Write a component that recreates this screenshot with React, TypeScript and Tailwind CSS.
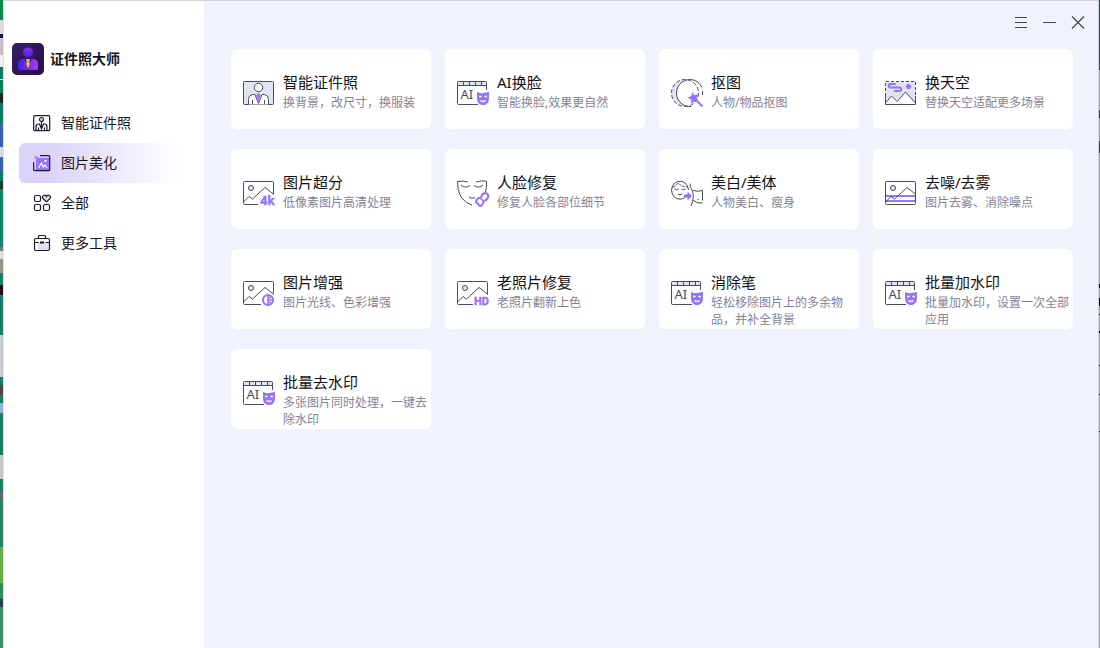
import { useState } from "react";
import type { ReactNode } from "react";

type IconName =
  | "portrait"
  | "ai"
  | "cutout"
  | "sky"
  | "upscale"
  | "face"
  | "beauty"
  | "denoise"
  | "enhance"
  | "hd";

interface Tool {
  title: string;
  desc: string;
  icon: IconName;
}

const tools: Tool[] = [
  { title: "智能证件照", desc: "换背景，改尺寸，换服装", icon: "portrait" },
  { title: "AI换脸", desc: "智能换脸,效果更自然", icon: "ai" },
  { title: "抠图", desc: "人物/物品抠图", icon: "cutout" },
  { title: "换天空", desc: "替换天空适配更多场景", icon: "sky" },
  { title: "图片超分", desc: "低像素图片高清处理", icon: "upscale" },
  { title: "人脸修复", desc: "修复人脸各部位细节", icon: "face" },
  { title: "美白/美体", desc: "人物美白、瘦身", icon: "beauty" },
  { title: "去噪/去雾", desc: "图片去雾、消除噪点", icon: "denoise" },
  { title: "图片增强", desc: "图片光线、色彩增强", icon: "enhance" },
  { title: "老照片修复", desc: "老照片翻新上色", icon: "hd" },
  { title: "消除笔", desc: "轻松移除图片上的多余物品，并补全背景", icon: "ai" },
  { title: "批量加水印", desc: "批量加水印，设置一次全部应用", icon: "ai" },
  { title: "批量去水印", desc: "多张图片同时处理，一键去除水印", icon: "ai" },
];

const ink = "#4a4a5c";
const violet = "#9373ff";
const pale = "#dfe4f0";

// sun and mountains, shared by the photo style icons
const Scenery = () => (
  <>
    <circle cx="8" cy="9" r="2.5" fill={pale} />
    <path d="M.5 23 6 17.5l3.5 2.5L22 8.5l9 7" />
  </>
);

const drawings: Record<IconName, ReactNode> = {
  portrait: (
    <>
      <rect x=".5" y="2.5" width="30" height="23" rx="1" fill={pale} />
      <path
        d="M5.5 25.5v-6q0-4 4-4l3-.5h6l3 .5q4 0 4 4v6z"
        fill="#fff"
        stroke="none"
      />
      <circle cx="15.5" cy="8.5" r="4.2" fill="#fff" />
      <path d="M5.5 25.5v-5q0-4.5 4-5h2.5l3.5 9 3.5-9h2.5q4 .5 4 5v5M9.5 25v-4M21.5 25v-4" />
      <path
        d="m15.5 14 2.5 2.5-1.5 2.5.5 2-1.5 3-1.5-3 .5-2-1.5-2.5z"
        fill={violet}
        stroke="none"
      />
    </>
  ),
  ai: (
    <>
      <rect x=".5" y="2.5" width="29" height="4" fill={pale} stroke="none" />
      <path d="M29.5 11V3.5q0-1-1-1h-27q-1 0-1 1v21q0 1 1 1H21M.5 6.5h29M6.5 3v3.500M12.5 3v3.500M18.5 3v3.500M24.5 3v3.500" />
      <text
        x="3.5"
        y="20"
        fill={ink}
        stroke="none"
        className="font-['Noto_Sans'] text-[13px]"
      >
        AI
      </text>
      <path
        d="M20 13q3 1.500 6 1t6-1v6q0 5-3.500 6.500-2.500 1-5 0Q20 24 20 19z"
        fill={violet}
        stroke="none"
      />
      <path d="M22 17.500h2.500M27.500 17.500H30M23.500 21.500q2.500 2 5 0" stroke="#fff" strokeWidth="1.5" />
    </>
  ),
  cutout: (
    <>
      <path d="M14 .5a13.500 13.500 0 0 0 0 27h5A13.500 13.500 0 0 1 19 .5z" fill={pale} stroke="none" />
      <circle cx="14" cy="14" r="13.5" strokeDasharray="4 2" />
      <path d="M26 2.500A13.500 13.500 0 1 0 20 27.500" />
      <path d="M26 2.500q3 2 5 6M31.500 12v4" />
      <path
        d="m21 12.500 2 3.500 4.500-.5-2 3.500 2 3.500-4-.5-3 3-.5-4.500-3.500-2 4-1.500z"
        fill={violet}
        stroke="none"
      />
      <path d="m25 21 6.500 6.500" stroke={violet} strokeWidth="2" />
    </>
  ),
  sky: (
    <>
      <path d="M.5 2.500h30v21.500L20.500 13 12 22l-5.500-5-6 7z" fill={pale} stroke="none" />
      <path d="M.5 17V2.500h30V17" strokeDasharray="3 2" />
      <path d="M.5 17v8.500h30V17M.5 24l6-7 5.500 5.500L20.500 13l10 11" />
      <path
        d="M10 5H5.500a1.700 1.700 0 0 0 0 3.500h9a1.700 1.700 0 0 1 0 3.500H10"
        stroke={violet}
        strokeWidth="2"
        strokeLinecap="round"
      />
      <circle cx="23.500" cy="7.500" r="2.5" fill={violet} stroke="none" />
    </>
  ),
  upscale: (
    <>
      <path d="M30.500 15V3.500q0-1-1-1h-28q-1 0-1 1v21q0 1 1 1H15" />
      <Scenery />
      <text
        x="17"
        y="26"
        fill={violet}
        stroke={violet}
        strokeWidth=".4"
        className="font-['Roboto'] text-[13px] font-bold"
      >
        4k
      </text>
    </>
  ),
  face: (
    <>
      <path d="M.5 2Q0 11 4 18q5 7 11 8M29.500 2q.5 6-1 11M1 2.500q5-1 10 .5M19 3q5-1.500 10-1M4 6q4 4 9 .5M17 6.500q5 3.500 9-.5M12 18q3 2.500 6 .5" />
      <path
        d="M24 18.500q1-4 4-4.500 4 .5 3 4.500-1.500 3-4.500 3.500-.5 4-3 5-2-.5-2.500-2.500-2-.5-2-2.500 1.500-3.500 5-3.500z"
        fill="#fff"
        stroke={violet}
        strokeWidth="2"
      />
      <path d="m23.500 19.500 3 2.500" stroke={violet} strokeWidth="1.5" />
    </>
  ),
  beauty: (
    <>
      <path d="M14 18.500A8.500 9 0 1 1 17.500 11" />
      <path d="M1 8q3 0 6-4 4 4 10 4" strokeDasharray="3 1" />
      <path d="M3.500 10q2 1.500 4 0M10.500 10q2 1.500 4 0M7 15q2 1.500 4 0M19 4.500q0 3 2 6.500 3 7-1 16M22 11.500q5 1.500 9.500 0v10M22 21q4 4 9.500 3" />
      <circle cx="27" cy="20.500" r=".7" fill={ink} stroke="none" />
      <path
        d="M13 15.500h3.500v-3l4.500 4.500-4.500 4.500v-3H13z"
        fill={violet}
        stroke="none"
      />
    </>
  ),
  denoise: (
    <>
      <path d="M1 17h30M1 22h30" stroke={violet} strokeWidth="2" />
      <rect x=".5" y="2.5" width="30" height="23" rx="1" />
      <Scenery />
    </>
  ),
  enhance: (
    <>
      <path d="M30.500 14V3.500q0-1-1-1h-28q-1 0-1 1v21q0 1 1 1H18" />
      <Scenery />
      <circle cx="25" cy="21" r="5" fill="#fff" stroke={violet} strokeWidth="2" />
      <path d="M25 16v10M25 18.500h3M25 21h4M25 23.500h3" stroke={violet} strokeWidth="1.5" />
    </>
  ),
  hd: (
    <>
      <path d="M30.500 15V3.500q0-1-1-1h-28q-1 0-1 1v21q0 1 1 1H16" />
      <Scenery />
      <text
        x="17"
        y="26"
        fill={violet}
        stroke={violet}
        strokeWidth=".4"
        className="font-['Roboto'] text-[11px] font-bold"
      >
        HD
      </text>
    </>
  ),
};

function ToolIcon({ name }: { name: IconName }) {
  return (
    <svg
      className="mt-[30px] h-7 w-[34px] shrink-0"
      viewBox="0 0 34 28"
      fill="none"
      stroke={ink}
      aria-hidden="true"
    >
      {drawings[name]}
    </svg>
  );
}

function ToolCard({ tool }: { tool: Tool }) {
  return (
    <button className="flex h-20 cursor-pointer items-start gap-1.5 rounded-md bg-white pl-3 text-left">
      <ToolIcon name={tool.icon} />
      <span className="flex flex-col gap-px pt-[22px]">
        <span className="text-[15px] leading-[22px] text-[#111118]">{tool.title}</span>
        <span className="text-xs leading-[17px] text-[#858394]">{tool.desc}</span>
      </span>
    </button>
  );
}

const navItems: { label: string; icon: ReactNode }[] = [
  {
    label: "智能证件照",
    icon: (
      <>
        <rect x=".7" y="1.7" width="16" height="15" rx="1" />
        <circle cx="8.5" cy="5.5" r="2" fill={pale} />
        <path d="M3 16.500v-4q0-2.500 2.500-2.500h1l2 5 2-5h1q2.500 0 2.500 2.500v4M5.500 16v-2.500M11.500 16v-2.500M8.500 8v6" />
      </>
    ),
  },
  {
    label: "图片美化",
    icon: (
      <>
        <rect x="3" y="4" width="13" height="12" fill={violet} stroke="none" />
        <path d="M7 1.700h8.700q1 0 1 1v13q0 1-1 1h-14q-1 0-1-1V8" />
        <path d="m5.500 14 3-5 2 4 1.500-2 2 3" stroke="#fff" />
        <circle cx="12.500" cy="7" r="1.200" fill="#fff" stroke="none" />
        <path d="m2.500 1 1 1.500L5.500 3 4 4.500l-.5 2-1-2L.5 4l1.500-1.500z" fill="#a88cff" stroke="none" />
      </>
    ),
  },
  {
    label: "全部",
    icon: (
      <>
        <rect x="1.5" y="1.5" width="6" height="6" rx="1.5" />
        <rect x="1.5" y="10.5" width="6" height="6" rx="1.5" />
        <rect x="10.5" y="10.5" width="6" height="6" rx="1.5" />
        <path
          d="m13.500 8-3.800-3.800a2 2 0 0 1 3.800-1.700 2 2 0 0 1 3.800 1.700z"
          fill={pale}
        />
      </>
    ),
  },
  {
    label: "更多工具",
    icon: (
      <>
        <rect x="5" y="8" width="11" height="8" fill={pale} stroke="none" />
        <rect x="1.5" y="4.5" width="15" height="12" rx="1.5" />
        <path d="M5.500 4.500V2.500q0-1 1-1h5q1 0 1 1v2M1.500 8.500h4M12.500 8.500h4" />
        <path d="M7 8.500h4" strokeWidth="2" />
      </>
    ),
  },
];

function Logo() {
  return (
    <svg className="size-8" viewBox="0 0 32 32" aria-hidden="true">
      <defs>
        <linearGradient id="tile" x1="0" y1="0" x2="1" y2="1">
          <stop offset="0" stopColor="#34206a" />
          <stop offset="1" stopColor="#2b0c48" />
        </linearGradient>
        <linearGradient id="head" x1="0" y1="0" x2="0" y2="1">
          <stop offset="0" stopColor="#8b2ff0" />
          <stop offset="1" stopColor="#4c1fd0" />
        </linearGradient>
        <linearGradient id="suit" x1="0" y1="0" x2="1" y2="0">
          <stop offset="0" stopColor="#3f22e8" />
          <stop offset="1" stopColor="#b035f5" />
        </linearGradient>
      </defs>
      <rect width="32" height="32" rx="5" fill="url(#tile)" />
      <circle cx="16" cy="9.5" r="5" fill="url(#head)" />
      <path d="M6 25v-4q0-5 5-5h10q5 0 5 5v4q0 2-2 2H8q-2 0-2-2z" fill="url(#suit)" />
      <path d="m13 16 3 11 3-11z" fill="#1d0b3a" />
      <path d="M14 16h4l-.5 3 .5 2-2 5-2-5 .5-2z" fill="#e8a860" />
    </svg>
  );
}

function Sidebar() {
  const [active, setActive] = useState("图片美化");

  return (
    <aside className="w-[200px] shrink-0 bg-white">
      <div className="flex items-center gap-1.5 pt-[42px] pl-2">
        <Logo />
        <h1 className="text-sm font-bold text-[#16161f]">证件照大师</h1>
      </div>
      <nav className="mt-7 flex flex-col pr-4 pl-[15px]">
        {navItems.map((item) => (
          <button
            key={item.label}
            onClick={() => setActive(item.label)}
            className={`flex h-10 cursor-pointer items-center gap-2.5 rounded-md pl-3.5 text-sm text-[#16161f] ${
              active === item.label
                ? "bg-linear-to-r from-[#dad2f8] from-15% to-white to-95%"
                : ""
            }`}
          >
            <svg
              className="size-[18px]"
              viewBox="0 0 18 18"
              fill="none"
              stroke="#1c1c26"
              strokeWidth="1.2"
              aria-hidden="true"
            >
              {item.icon}
            </svg>
            {item.label}
          </button>
        ))}
      </nav>
    </aside>
  );
}

// slivers of the desktop behind the window
const desktopLeft = [
  "h-5 bg-[#0c8a4c]",
  "h-3.5 bg-[#dcdcdc]",
  "h-1 bg-[#10105a]",
  "h-[17px] bg-[#c9bfc4]",
  "h-3 bg-[#f0f0f0]",
  "h-3 bg-[#0a7c5c]",
  "h-px bg-white",
  "h-[13px] bg-[#0a7c5c]",
  "h-2.5 bg-[#1d2a1e]",
  "h-5 bg-[#0a7c62]",
  "h-6 bg-[#3862b4]",
  "h-2.5 bg-[#d5dbe8]",
  "h-3.5 bg-[#3862b4]",
  "h-2.5 bg-[#0a7c62]",
  "h-2 bg-[#1f3d38]",
  "h-[58px] bg-[#0e8468]",
  "h-1 bg-[#777]",
  "h-2 bg-[#e0e0e0]",
  "h-3.5 bg-[#98948a]",
  "h-3 bg-[#12806a]",
  "h-2.5 bg-[#2c0c0c]",
  "h-10 bg-[#147c6a]",
  "h-[42px] bg-[#c6ced4]",
  "h-2 bg-[#187a62]",
  "h-2.5 bg-[#4a4a4a]",
  "h-2 bg-[#187a62]",
  "h-2.5 bg-[#8fb4dc]",
  "h-[42px] bg-[#187a60]",
  "h-6 bg-[#c8c8c8]",
  "h-3 bg-[#1c7e60]",
  "h-2 bg-[#5a6a70]",
  "h-12 bg-[#24835e]",
  "h-9 bg-[#66ae48]",
  "h-4 bg-[#2f8a60]",
  "h-2 bg-[#1f4450]",
  "grow bg-[#3a8c62]",
];

const desktopRight = [
  "h-[70px] bg-[#0b5c5a]",
  "h-10 bg-[#a8a8b0]",
  "h-2 bg-[#333]",
  "h-[23px] bg-[#a8a8b0]",
  "h-3 bg-[#4a3c28]",
  "h-[131px] bg-[#a0a0a8]",
  "h-1 bg-black",
  "h-2.5 bg-[#a8a8b0]",
  "h-2 bg-black",
  "h-2 bg-[#a8a8b0]",
  "h-px bg-black",
  "h-4 bg-[#a8a8b0]",
  "h-0.5 bg-black",
  "h-8 bg-[#a8a8b0]",
  "h-px bg-black",
  "h-7 bg-[#a8a8b0]",
  "h-px bg-black",
  "h-9 bg-[#a8a8b0]",
  "h-px bg-black",
  "grow bg-[#a8a8b0]",
];

export default function App() {
  return (
    <div className="flex min-h-screen font-['Noto_Sans','Noto_Sans_CJK_SC',sans-serif]">
      <div className="flex w-[3px] shrink-0 flex-col" aria-hidden="true">
        {desktopLeft.map((piece, i) => (
          <div key={i} className={piece} />
        ))}
      </div>

      <div className="flex min-w-0 grow border-t border-r border-l border-[#d3d3df] border-l-[#dfe0e6]">
        <Sidebar />
        <main className="grow bg-[#f0f3fd]">
          <header className="flex h-12 items-start justify-end gap-3.5 pt-[15px] pr-[13px] text-[#454552]">
            <button aria-label="菜单" className="cursor-pointer">
              <svg className="h-3.5 w-3.5" viewBox="0 0 14 14" stroke="currentColor">
                <path d="M0 1.500h12M0 6.500h12M0 11.500h12" />
              </svg>
            </button>
            <button aria-label="最小化" className="cursor-pointer">
              <svg className="h-3.5 w-3.5" viewBox="0 0 14 14" stroke="currentColor">
                <path d="M0 6.500h13" />
              </svg>
            </button>
            <button aria-label="关闭" className="cursor-pointer">
              <svg className="h-3.5 w-3.5" viewBox="0 0 14 14" stroke="currentColor">
                <path d="m1 .5 12 12M13 .5l-12 12" strokeWidth="1.2" />
              </svg>
            </button>
          </header>
          <div className="grid grid-cols-[repeat(auto-fill,minmax(200px,1fr))] gap-x-3.5 gap-y-5 pr-[25px] pb-5 pl-[27px]">
            {tools.map((tool) => (
              <ToolCard key={tool.title} tool={tool} />
            ))}
          </div>
        </main>
      </div>

      <div className="flex w-px shrink-0 flex-col" aria-hidden="true">
        {desktopRight.map((piece, i) => (
          <div key={i} className={piece} />
        ))}
      </div>
    </div>
  );
}
